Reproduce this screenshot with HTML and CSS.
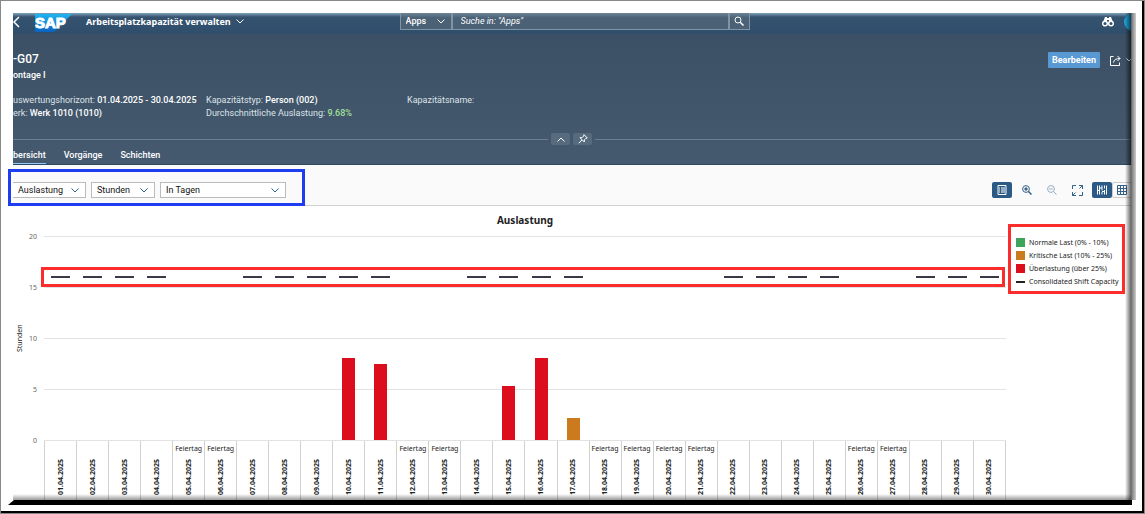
FILE: index.html
```html
<!DOCTYPE html>
<html lang="de">

<head>
    <meta charset="UTF-8">
    <meta name="viewport" content="width=device-width, initial-scale=1.0">
    <title>Arbeitsplatzkapazität verwalten</title>
    <link rel="stylesheet" href="styles.css">
</head>

<body>

<div class="frame">
<div class="panel">

<!-- Shell-Leiste -->
<header class="shell">
    <div class="shell-left">
        <a href="#" class="back" aria-label="Zurück">
            <svg width="7" height="12" viewBox="0 0 7 12"><path d="M6 1 1 6l5 5" class="line bold"/></svg>
        </a>
        <svg class="logo" width="37" height="18" viewBox="0 0 37 18">
            <defs>
                <linearGradient id="sap" x1="0" y1="0" x2="0" y2="1">
                    <stop offset="0" stop-color="#1fb4f0"/>
                    <stop offset="1" stop-color="#0a62c0"/>
                </linearGradient>
            </defs>
            <path d="M0 0h37L19 18H0z" fill="url(#sap)"/>
            <text x="0" y="14" class="logo-text">SAP</text>
        </svg>
        <a href="#" class="app-title">Arbeitsplatzkapazität verwalten
            <svg width="8" height="5" viewBox="0 0 8 5"><path d="m.5.5 3.5 3.500 3.500-3.500" class="line"/></svg>
        </a>
    </div>
    <form class="search">
        <select class="search-scope" aria-label="Suchbereich"><option>Apps</option></select>
        <input class="search-input" type="text" placeholder='Suche in: "Apps"' aria-label="Suche">
        <button class="search-button" type="button" aria-label="Suchen">
            <svg width="10" height="10" viewBox="0 0 10 10"><circle cx="4" cy="4" r="3" class="line"/><path d="m6.200 6.200 3.300 3.300" class="line bold"/></svg>
        </button>
    </form>
    <div class="shell-right">
        <svg width="12" height="11" viewBox="0 0 12 11"><path d="M3 1h2v1h2V1h2l1.500 4H7V4H5v1H1.500z" fill="#fff"/><circle cx="3" cy="7.500" r="2.300" class="line bold"/><circle cx="9" cy="7.500" r="2.300" class="line bold"/></svg>
        <span class="avatar"></span>
    </div>
</header>

<!-- Kopfbereich -->
<section class="object-header">
    <div class="title-row">
        <div>
            <h1>-G07</h1>
            <p class="subtitle">ontage I</p>
        </div>
        <div class="actions">
            <button class="edit-button" type="button">Bearbeiten</button>
            <button class="share-button" type="button" aria-label="Teilen">
                <svg width="11" height="11" viewBox="0 0 11 11"><path d="M3.500 1.500h-3v9h9v-3M3.500 7.500q.5-4 6.500-4M7.500 1 10 3.500 7.500 6" class="line"/></svg>
                <svg width="6" height="4" viewBox="0 0 6 4"><path d="m.5.5 2.500 2.500L5.500.5" class="line"/></svg>
            </button>
        </div>
    </div>
    <div class="facts">
        <div>
            <p>uswertungshorizont: <b>01.04.2025 - 30.04.2025</b></p>
            <p>erk: <b>Werk 1010 (1010)</b></p>
        </div>
        <div>
            <p>Kapazitätstyp: <b>Person (002)</b></p>
            <p>Durchschnittliche Auslastung: <b class="good">9.68%</b></p>
        </div>
        <div>
            <p>Kapazitätsname:</p>
        </div>
    </div>
    <div class="collapse">
        <button type="button" aria-label="Kopf einklappen">
            <svg width="8" height="5" viewBox="0 0 8 5"><path d="M.5 4.500 4 1l3.500 3.500" class="line"/></svg>
        </button>
        <button type="button" aria-label="Kopf anheften">
            <svg width="10" height="10" viewBox="0 0 10 10"><path d="M6 .7 9.300 4 8 4.300 6.300 6v2L2 3.700h2L5.700 2zM3.900 6 .8 9.200" class="line"/></svg>
        </button>
    </div>
    <nav class="tabs">
        <a href="#" class="tab active">bersicht</a>
        <a href="#" class="tab">Vorgänge</a>
        <a href="#" class="tab">Schichten</a>
    </nav>
</section>

<!-- Werkzeugleiste -->
<div class="toolbar">
    <div class="filters">
        <select class="filter first" aria-label="Kennzahl"><option>Auslastung</option></select>
        <select class="filter unit" aria-label="Einheit"><option>Stunden</option></select>
        <select class="filter period" aria-label="Zeitraum"><option>In Tagen</option></select>
    </div>
    <div class="tools">
        <button class="tool on" type="button" aria-label="Legende">
            <svg width="10" height="10" viewBox="0 0 10 10"><path d="M1 .5h8v9H1zM4 3h4M4 5h4M4 7h4M2 3h1M2 5h1M2 7h1" class="line"/></svg>
        </button>
        <button class="tool" type="button" aria-label="Vergrößern">
            <svg width="10" height="10" viewBox="0 0 10 10"><circle cx="4" cy="4" r="3.400" class="line"/><path d="M2.300 4h3.400M4 2.300v3.400M6.500 6.500l3 3" class="line bold"/></svg>
        </button>
        <button class="tool off" type="button" aria-label="Verkleinern">
            <svg width="10" height="10" viewBox="0 0 10 10"><circle cx="4" cy="4" r="3.400" class="line"/><path d="M2.300 4h3.400M6.500 6.500l3 3" class="line"/></svg>
        </button>
        <button class="tool" type="button" aria-label="Vollbild">
            <svg width="11" height="11" viewBox="0 0 11 11"><path d="M7 .5h3.500V4M10.500.5 7.500 3.500M4 10.500H.5V7M.5 10.500l3-3M.5 4V.5H4M10.500 7v3.500H7" class="line"/></svg>
        </button>
        <div class="segmented">
            <button class="tool on" type="button" aria-label="Diagramm">
                <svg width="10" height="10" viewBox="0 0 10 10"><path d="M.5.5v9M2.500.5v9M5 .5v5M5 7v2.500M7.500.5v3M7.500 5v4.500M9.500.5v9M.5 5.500h2M2.500 3h2.500M5 6.500h2.500" class="line"/></svg>
            </button>
            <button class="tool" type="button" aria-label="Tabelle">
                <svg width="10" height="10" viewBox="0 0 10 10"><path d="M.5.5h9v9h-9zM3.500.5v9M6.500.5v9M.5 3.500h9M.5 6.500h9" class="line"/></svg>
            </button>
        </div>
    </div>
</div>

<!-- Diagramm -->
<main class="chart">
    <div class="axis-title">Stunden</div>
    <div class="scale">
        <span>20</span><span>15</span><span>10</span><span>5</span><span>0</span>
    </div>
    <div class="plot-area">
        <h2>Auslastung</h2>
        <div class="plot">
            <div class="days" id="bars"></div>
            <div class="capacity-box"></div>
        </div>
        <div class="days axis" id="axis"></div>
    </div>
    <ul class="legend">
        <li><span class="key normal"></span>Normale Last (0% - 10%)</li>
        <li><span class="key critical"></span>Kritische Last (10% - 25%)</li>
        <li><span class="key overload"></span>Überlastung (über 25%)</li>
        <li><span class="key capacity"></span>Consolidated Shift Capacity</li>
    </ul>
</main>

<div class="edge"></div>
</div>
<div class="base"></div>
</div>

<script src="chart.js"></script>
</body>

</html>
```
FILE: styles.css
```css
* {
    box-sizing: border-box;
}

body {
    margin: 0;
    font-family: Roboto, "Noto Sans", sans-serif;
    font-size: 9px;
    line-height: 13px;
    color: #222;
    background-color: #fff;
}

h1, h2, p, ul {
    margin: 0;
    padding: 0;
}

a {
    color: inherit;
    text-decoration: none;
}

button, select, input {
    font: inherit;
    color: inherit;
    margin: 0;
    padding: 0;
    border: 0;
    border-radius: 0;
    background: none;
}

select {
    appearance: none;
    background: no-repeat right 6px center;
}

svg {
    display: block;
    flex: none;
}

.line {
    fill: none;
    stroke: currentColor;
    stroke-width: 1;
}

.line.bold {
    stroke-width: 1.5;
}

/* Rahmen */
.frame {
    min-height: 100vh;
    padding: 12px 8px 8px 12px;
    border: 1px solid #888;
    box-shadow: inset -2px -2px 0 #000;
    display: flex;
    flex-direction: column;
}

.panel {
    flex: 1;
    position: relative;
    display: flex;
    flex-direction: column;
}

.edge {
    position: absolute;
    inset: 0;
    pointer-events: none;
    background:
        linear-gradient(to right, transparent, rgba(0, 0, 0, 0.6) 55%, #777 60%, #ccc) right / 11px 100% no-repeat,
        linear-gradient(to bottom, transparent, rgba(0, 0, 0, 0.4)) bottom / 100% 6px no-repeat;
}

.base {
    height: 5px;
    margin: 0 4px 0 -5px;
    background-color: #000;
    clip-path: polygon(6px 0, 100% 0, 100% 100%, 0 100%);
}

/* Shell-Leiste */
.shell {
    display: grid;
    grid-template-columns: 1fr 350px 1fr;
    height: 21px;
    color: #fff;
    background: linear-gradient(#7fa3bd, #35536f 4px, #2f4e6c);
    overflow: hidden;
}

.shell-left, .shell-right {
    display: flex;
    align-items: center;
    height: 17px;
}

.logo {
    margin: 2px 14px 0 15px;
}

.logo-text {
    font-family: "Liberation Sans", sans-serif;
    font-size: 15px;
    font-weight: bold;
    fill: #fff;
    stroke: #fff;
}

.app-title {
    display: flex;
    align-items: center;
    gap: 5px;
    font-family: "Noto Sans", sans-serif;
    font-weight: bold;
}

.shell-right {
    justify-content: flex-end;
    gap: 10px;
}

.avatar {
    width: 18px;
    height: 18px;
    margin-right: -6px;
    border-radius: 50%;
    background-color: #1fa0d8;
}

.search {
    display: flex;
    height: 17px;
    background: linear-gradient(#6d8496, #4a6176 5px);
}

.search-scope, .search-input, .search-button {
    border: 1px solid #8194a5;
    border-top: 0;
}

.search-scope {
    width: 52px;
    padding-left: 5px;
    font-weight: 500;
    background-image: url("data:image/svg+xml,%3Csvg xmlns='http://www.w3.org/2000/svg' width='8' height='5'%3E%3Cpath d='M.5.5 4 4 7.500.5' fill='none' stroke='%23fff'/%3E%3C/svg%3E");
}

.search-input {
    flex: 1;
    min-width: 0;
    padding-left: 8px;
    font-style: italic;
}

.search-input::placeholder {
    color: #fff;
    opacity: 1;
}

.search-button {
    width: 21px;
    display: flex;
    align-items: center;
    justify-content: center;
}

/* Kopfbereich */
.object-header {
    color: #fff;
    background: linear-gradient(#3b5064, #455a6f);
    border-bottom: 1px solid #2c4a66;
}

.title-row {
    display: flex;
    justify-content: space-between;
    height: 60px;
    padding-top: 18px;
}

h1 {
    font-size: 12px;
    font-weight: 500;
    line-height: 15px;
}

.subtitle {
    font-weight: 500;
    line-height: 16px;
}

.actions {
    display: flex;
    align-items: flex-start;
    gap: 10px;
    padding-right: 4px;
}

.edit-button {
    height: 16px;
    width: 52px;
    font-weight: bold;
    background-color: #5899d4;
    border-radius: 1px;
}

.share-button {
    height: 16px;
    display: flex;
    align-items: center;
    gap: 5px;
}

.facts {
    display: grid;
    grid-template-columns: 193px 201px 1fr;
    height: 39px;
    color: #dde3e8;
}

.facts b {
    font-weight: 500;
    color: #fff;
}

.facts .good {
    color: #a5e09a;
}

.collapse {
    display: flex;
    align-items: center;
    justify-content: center;
    gap: 3px;
    height: 12px;
    padding-right: 6px;
}

.collapse::before, .collapse::after {
    content: "";
    flex: 1;
    height: 1px;
    background-color: #6a7f90;
}

.collapse button {
    width: 19px;
    height: 12px;
    display: flex;
    align-items: center;
    justify-content: center;
    background-color: #566b7e;
    border-radius: 2px;
}

.tabs {
    display: flex;
    gap: 18px;
    height: 19px;
    font-weight: 500;
}

.tab {
    padding-top: 4px;
}

.tab.active {
    border-bottom: 1px solid #91c8f6;
}

/* Werkzeugleiste */
.toolbar {
    display: flex;
    justify-content: space-between;
    height: 41px;
    padding-top: 4px;
    color: #346187;
    background-color: #fafafa;
    border-bottom: 1px solid #d0d0d0;
}

.filters {
    display: flex;
    align-items: center;
    gap: 5px;
    height: 37px;
    margin-left: -5px;
    padding: 5px 16px 0 2px;
    border: 3px solid #1f3df0;
    color: #111;
}

.filter {
    height: 16px;
    padding-left: 5px;
    border: 1px solid #bbb;
    background-color: #fff;
    background-image: url("data:image/svg+xml,%3Csvg xmlns='http://www.w3.org/2000/svg' width='8' height='5'%3E%3Cpath d='M.5.5 4 4 7.500.5' fill='none' stroke='%23346187'/%3E%3C/svg%3E");
}

.filter.first {
    width: 73px;
    border-left: 0;
}

.filter.unit {
    width: 64px;
}

.filter.period {
    width: 126px;
}

.tools {
    display: flex;
    gap: 5px;
    padding: 13px 4px 0 0;
}

.segmented {
    display: flex;
}

.tool {
    width: 20px;
    height: 16px;
    display: flex;
    align-items: center;
    justify-content: center;
    border-radius: 2px;
}

.tool.on {
    color: #fff;
    background-color: #2c5a87;
}

.tool.off {
    opacity: 0.5;
}

.segmented .tool:last-child {
    border: 1px solid #ccc;
}

/* Diagramm */
.chart {
    flex: 1;
    display: flex;
    font-family: "Noto Sans", sans-serif;
    font-size: 7px;
    line-height: 10px;
    padding-right: 11px;
}

.axis-title {
    width: 14px;
    height: 264px;
    line-height: 14px;
    text-align: center;
    writing-mode: vertical-rl;
    transform: rotate(180deg);
}

.scale {
    width: 10px;
    height: 214px;
    margin: 26px 7px 0 0;
    display: flex;
    flex-direction: column;
    justify-content: space-between;
    text-align: right;
    color: #666;
}

.plot-area {
    flex: 1;
    display: flex;
    flex-direction: column;
}

h2 {
    height: 30px;
    padding-top: 7px;
    font-size: 10px;
    line-height: 14px;
    text-align: center;
}

.plot {
    position: relative;
    height: 205px;
    background: repeating-linear-gradient(#e2e2e2 0 1px, transparent 1px 51px);
}

.days {
    display: grid;
    grid-template-columns: repeat(30, 1fr);
}

.plot .days {
    height: 204px;
}

.day {
    position: relative;
    display: flex;
    align-items: flex-end;
    justify-content: center;
}

.bar {
    width: 13px;
}

.mark {
    position: absolute;
    bottom: 80%;
    width: 19px;
    height: 2px;
    margin-bottom: -1px;
    background-color: #3a3a46;
}

.capacity-box {
    position: absolute;
    top: 31px;
    left: -3px;
    right: 1px;
    height: 20px;
    border: 3px solid #fb2c2c;
}

.axis {
    flex: 1;
    border-right: 1px solid #d0d0d0;
}

.date {
    display: flex;
    flex-direction: column;
    align-items: center;
    border-left: 1px solid #d0d0d0;
}

.holiday {
    height: 18px;
    padding-top: 3px;
}

.date time {
    writing-mode: vertical-rl;
    transform: rotate(180deg);
    font-weight: bold;
}

.legend {
    width: 117px;
    height: 70px;
    margin: 18px 0 0 2px;
    padding: 9px 0 0 5px;
    border: 3px solid #fb2c2c;
    list-style: none;
}

.legend li {
    display: flex;
    align-items: center;
    gap: 4px;
    height: 13px;
    white-space: nowrap;
}

.key {
    width: 9px;
    height: 9px;
}

.normal {
    background-color: #3fa45b;
}

.critical {
    background-color: #cc7a1e;
}

.overload {
    background-color: #dc0d1c;
}

.key.capacity {
    height: 2px;
    background-color: #222;
}
```
FILE: chart.js
```javascript
// Auslastung in Stunden je Tag
var last = { 10: 8, 11: 7.5, 15: 5.3, 16: 8, 17: 2.2 };
var feiertage = [5, 6, 12, 13, 18, 19, 20, 21, 26, 27];

var bars = document.getElementById("bars");
var axis = document.getElementById("axis");

for (var tag = 1; tag <= 30; tag++) {
    var frei = feiertage.indexOf(tag) !== -1;
    var day = document.createElement("div");
    day.className = "day";
    if (last[tag]) {
        var bar = document.createElement("div");
        bar.className = "bar " + (last[tag] > 4 ? "overload" : "critical");
        bar.style.height = (last[tag] / 20 * 100) + "%";
        day.appendChild(bar);
    }
    if (!frei) {
        var mark = document.createElement("div");
        mark.className = "mark";
        day.appendChild(mark);
    }
    bars.appendChild(day);

    var date = document.createElement("div");
    date.className = "date";
    date.innerHTML = '<span class="holiday">' + (frei ? "Feiertag" : "") + "</span>" +
        "<time>" + (tag < 10 ? "0" + tag : tag) + ".04.2025</time>";
    axis.appendChild(date);
}
```
